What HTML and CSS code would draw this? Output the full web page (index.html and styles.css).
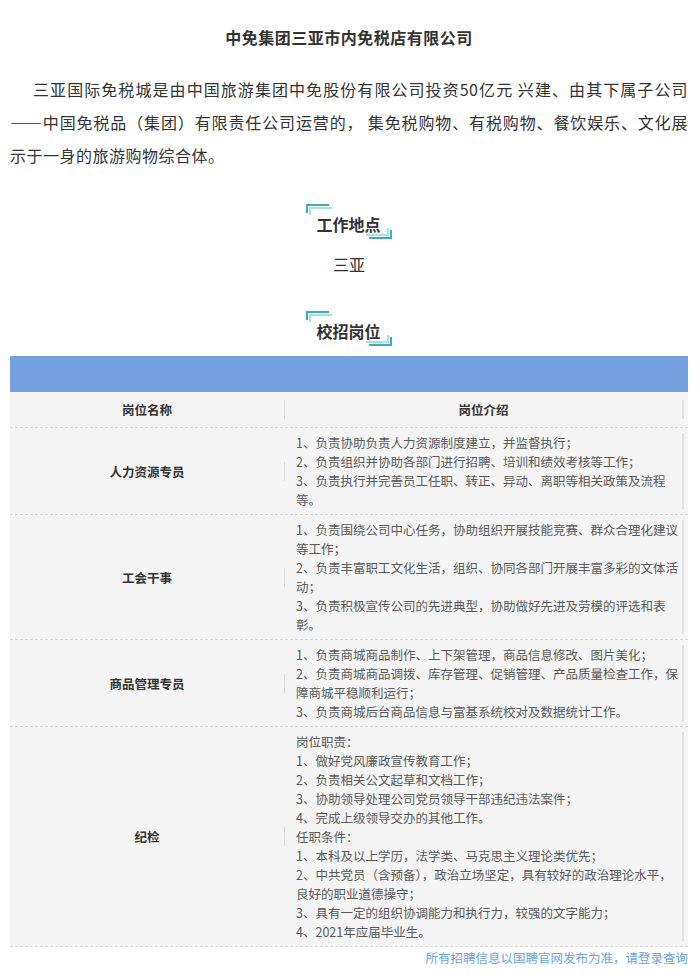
FILE: index.html
```html
<!DOCTYPE html>
<html lang="zh-CN">
<head>
    <meta charset="UTF-8">
    <meta name="viewport" content="width=device-width, initial-scale=1.0">
    <title>中免集团三亚市内免税店有限公司</title>
    <link rel="stylesheet" href="styles.css">
</head>
<body>

    <div class="page">
        <h1 class="company">中免集团三亚市内免税店有限公司</h1>
        <p class="intro">三亚国际免税城是由中国旅游集团中免股份有限公司投资50亿元 兴建、由其下属子公司——中国免税品（集团）有限责任公司运营的， 集免税购物、有税购物、餐饮娱乐、文化展示于一身的旅游购物综合体。</p>

        <div class="section">
            <h2 class="sec-title">工作地点</h2>
        </div>
        <p class="place">三亚</p>

        <div class="section section-jobs">
            <h2 class="sec-title">校招岗位</h2>
        </div>

        <div class="jobs">
            <div class="jobs-bar"></div>
            <div class="row row-head">
                <div class="name">岗位名称</div>
                <div class="desc">岗位介绍</div>
            </div>
            <div class="row">
                <div class="name">人力资源专员</div>
                <div class="desc">
                    1、负责协助负责人力资源制度建立，并监督执行；<br>
                    2、负责组织并协助各部门进行招聘、培训和绩效考核等工作；<br>
                    3、负责执行并完善员工任职、转正、异动、离职等相关政策及流程等。
                </div>
            </div>
            <div class="row">
                <div class="name">工会干事</div>
                <div class="desc">
                    1、负责围绕公司中心任务，协助组织开展技能竞赛、群众合理化建议等工作；<br>
                    2、负责丰富职工文化生活，组织、协同各部门开展丰富多彩的文体活动；<br>
                    3、负责积极宣传公司的先进典型，协助做好先进及劳模的评选和表彰。
                </div>
            </div>
            <div class="row">
                <div class="name">商品管理专员</div>
                <div class="desc">
                    1、负责商城商品制作、上下架管理，商品信息修改、图片美化；<br>
                    2、负责商城商品调拨、库存管理、促销管理、产品质量检查工作，保障商城平稳顺利运行；<br>
                    3、负责商城后台商品信息与富基系统校对及数据统计工作。
                </div>
            </div>
            <div class="row">
                <div class="name">纪检</div>
                <div class="desc">
                    岗位职责：<br>
                    1、做好党风廉政宣传教育工作；<br>
                    2、负责相关公文起草和文档工作；<br>
                    3、协助领导处理公司党员领导干部违纪违法案件；<br>
                    4、完成上级领导交办的其他工作。<br>
                    任职条件：<br>
                    1、本科及以上学历，法学类、马克思主义理论类优先；<br>
                    2、中共党员（含预备），政治立场坚定，具有较好的政治理论水平，良好的职业道德操守；<br>
                    3、具有一定的组织协调能力和执行力，较强的文字能力；<br>
                    4、2021年应届毕业生。
                </div>
            </div>
        </div>

        <p class="note">所有招聘信息以国聘官网发布为准，请登录查询</p>
    </div>

</body>
</html>
```

FILE: styles.css
```css
/* Base styles */
* {
    margin: 0;
    padding: 0;
    box-sizing: border-box;
}

body {
    font-family: "Noto Sans CJK SC", "Noto Sans", sans-serif;
    color: #333;
    background: #fff;
}

.page {
    padding: 25px 12px 0 10px;
}

.company {
    font-size: 16px;
    letter-spacing: 0.5px;
    line-height: 24px;
    text-align: center;
    font-weight: bold;
}

.intro {
    margin-top: 24px;
    font-size: 16px;
    letter-spacing: 0.5px;
    line-height: 33px;
    text-indent: 23px;
    text-align: justify;
}

/* Section headings with corner marks */
.section {
    margin-top: 32px;
    text-align: center;
}

.section-jobs {
    margin-top: 35px;
}

.sec-title {
    position: relative;
    display: inline-block;
    padding: 10px 11px 5px 10px;
    font-size: 16px;
    line-height: 20px;
    font-weight: bold;
    color: #333;
}

.sec-title::before,
.sec-title::after {
    content: "";
    position: absolute;
    width: 26px;
    height: 11px;
    background-repeat: no-repeat;
}

.sec-title::before {
    top: 0;
    left: 0;
    background-image:
        linear-gradient(#3fadb3, #3fadb3),
        linear-gradient(#3fadb3, #3fadb3),
        linear-gradient(#a6e1e4, #a6e1e4),
        linear-gradient(#a6e1e4, #a6e1e4);
    background-size: 23px 2px, 2px 9px, 23px 2px, 2px 8px;
    background-position: 0 0, 0 0, 3px 3px, 3px 3px;
}

.sec-title::after {
    right: 0;
    bottom: 0;
    background-image:
        linear-gradient(#3fadb3, #3fadb3),
        linear-gradient(#3fadb3, #3fadb3),
        linear-gradient(#a6e1e4, #a6e1e4),
        linear-gradient(#a6e1e4, #a6e1e4);
    background-size: 23px 2px, 2px 9px, 23px 2px, 2px 8px;
    background-position: right 0 bottom 0, right 0 bottom 0, right 3px bottom 3px, right 3px bottom 3px;
}

.place {
    margin-top: 13px;
    font-size: 16px;
    line-height: 24px;
    text-align: center;
}

/* Jobs table */
.jobs {
    margin-top: 10px;
    background: #f5f5f5;
}

.jobs-bar {
    height: 36px;
    background: #74a1dd;
}

.row {
    display: flex;
    align-items: center;
    padding: 5px 0;
    border-bottom: 1px dashed #d6d6d6;
}

.row-head {
    padding: 8px 0;
}

.name {
    width: 275px;
    flex-shrink: 0;
    border-right: 1px solid #dcdcdc;
    font-size: 12.5px;
    line-height: 19px;
    font-weight: bold;
    text-align: center;
    color: #333;
}

.desc {
    flex: 1;
    margin-right: 4px;
    padding-left: 11px;
    border-right: 2px solid #e2e2e2;
    font-size: 12.5px;
    line-height: 19px;
    color: #595959;
}

.row-head .desc {
    font-weight: bold;
    text-align: center;
    color: #333;
    padding-left: 0;
}

.note {
    margin-top: 1px;
    font-size: 12.5px;
    line-height: 20px;
    text-align: right;
    color: #6aa3e6;
}
```
